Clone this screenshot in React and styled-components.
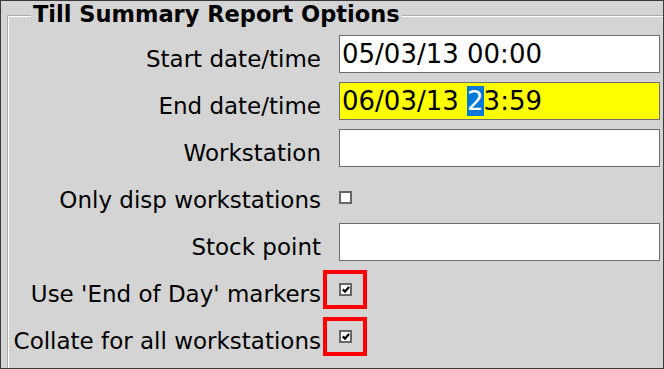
import React from "react";
import styled, { createGlobalStyle } from "styled-components";

const Global = createGlobalStyle`
  html, body {
    margin: 0;
    padding: 0;
    background: #d4d4d4;
  }
  * {
    box-sizing: border-box;
  }
`;

const Frame = styled.div`
  width: 664px;
  height: 369px;
  border: 1px solid #3a3a3a;
  background: #d4d4d4;
  overflow: hidden;
  padding: 1px 0 0 6px;
  font-family: "DejaVu Sans", Verdana, sans-serif;
  color: #000;
`;

const Group = styled.fieldset`
  margin: 0 -20px 0 0;
  padding: 5px 0 40px 1px;
  border: 2px groove #ffffff;
  min-height: 420px;
`;

const Title = styled.legend`
  margin-left: 21px;
  padding: 0 2px 3px;
  font-size: 22.5px;
  font-weight: bold;
  line-height: 25px;
`;

const Form = styled.div`
  display: grid;
  grid-template-columns: 311px 321px;
  column-gap: 18px;
  row-gap: 9px;
  grid-auto-rows: 38px;
`;

const Label = styled.div`
  display: flex;
  align-items: center;
  justify-content: flex-end;
  padding-top: 9px;
  font-size: 23px;
  white-space: nowrap;
`;

const Cell = styled.div`
  display: flex;
  align-items: center;
`;

const Field = styled.div`
  width: 100%;
  height: 38px;
  display: flex;
  align-items: center;
  padding: 0 2px;
  border: 1px solid #6e6e6e;
  background: ${(p) => (p.$active ? "#ffff00" : "#ffffff")};
  font-size: 26px;
  white-space: pre;
`;

const Selected = styled.span`
  background: #0078d7;
  color: #ffffff;
`;

const Box = styled.span`
  display: inline-flex;
  width: 13px;
  height: 13px;
  margin-top: ${(p) => (p.$marked ? "1px" : "4px")};
  border: 2px solid #666666;
  background: #ffffff;
  align-items: center;
  justify-content: center;
`;

const Marker = styled.span`
  display: flex;
  align-items: center;
  justify-content: center;
  width: 44px;
  height: 39px;
  margin-left: -16px;
  padding-left: 1px;
  border: 4px solid #ff0000;
`;

const Checkbox = ({ checked, marked }) => (
  <Box $marked={marked}>
    {checked && (
      <svg width="8" height="7" viewBox="0 0 8 7">
        <path d="M0.8 3.4 L3 5.6 L7 1" fill="none" stroke="#000" strokeWidth="2.2" />
      </svg>
    )}
  </Box>
);

const App = () => {
  return (
    <Frame>
      <Global />
      <Group>
        <Title>Till Summary Report Options</Title>
        <Form>
          <Label>Start date/time</Label>
          <Cell>
            <Field>05/03/13 00:00</Field>
          </Cell>

          <Label>End date/time</Label>
          <Cell>
            <Field $active>
              06/03/13 <Selected>2</Selected>3:59
            </Field>
          </Cell>

          <Label>Workstation</Label>
          <Cell>
            <Field />
          </Cell>

          <Label>Only disp workstations</Label>
          <Cell>
            <Checkbox />
          </Cell>

          <Label>Stock point</Label>
          <Cell>
            <Field />
          </Cell>

          <Label>Use 'End of Day' markers</Label>
          <Cell>
            <Marker>
              <Checkbox checked marked />
            </Marker>
          </Cell>

          <Label>Collate for all workstations</Label>
          <Cell>
            <Marker>
              <Checkbox checked marked />
            </Marker>
          </Cell>
        </Form>
      </Group>
    </Frame>
  );
};

export default App;
